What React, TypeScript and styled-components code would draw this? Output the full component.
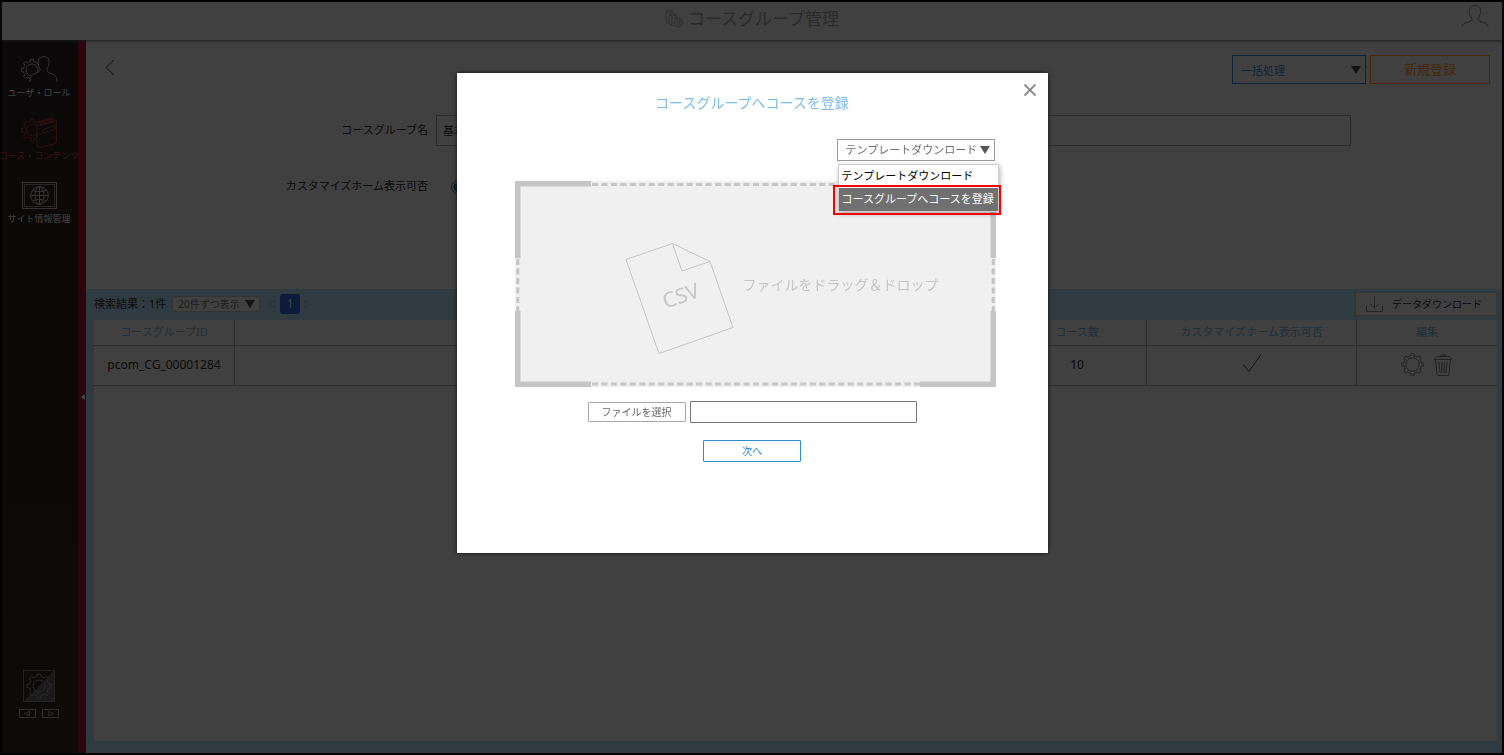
import React from "react";
import styled, { createGlobalStyle } from "styled-components";

const GlobalStyle = createGlobalStyle`
  *, *::before, *::after { box-sizing: border-box; }
  body {
    margin: 0;
    background: #000;
    font-family: "Noto Sans", "Noto Sans CJK JP", sans-serif;
    font-size: 11px;
    line-height: 16px;
    color: #0a0a0a;
  }
  button, input, select { font: inherit; color: inherit; margin: 0; }
  button { cursor: pointer; }
  svg { display: block; }
`;

/* ---------- page frame ---------- */

const Page = styled.div`
  display: flex;
  flex-direction: column;
  min-height: 100vh;
  border: 2px solid #000;
  background: #404040;
`;

const Header = styled.header`
  position: relative;
  z-index: 1;
  display: grid;
  grid-template-columns: 1fr auto 1fr;
  align-items: center;
  height: 38px;
  padding: 0 13px;
  background: #404040;
  box-shadow: 0 1px 3px #1c1c1c;
`;

const PageTitle = styled.h1`
  grid-column: 2;
  display: flex;
  align-items: center;
  gap: 4px;
  margin: 0;
  padding-bottom: 5px;
  font-size: 17px;
  line-height: 24px;
  font-weight: 400;
  color: #2b2b2b;
`;

const IconButton = styled.button`
  display: block;
  padding: 0;
  border: 0;
  background: none;
`;

const AccountButton = styled(IconButton)`
  justify-self: end;
  margin-bottom: 10px;
`;

const Body = styled.div`
  display: flex;
  flex: 1;
`;

/* ---------- side navigation ---------- */

const Sidebar = styled.aside`
  display: flex;
  flex-direction: column;
  flex: none;
  width: 76px;
  padding-right: 2px;
  background: linear-gradient(#0b0909, #0c0b08);
`;

const NavList = styled.nav`
  display: flex;
  flex-direction: column;
  gap: 14px;
  padding-top: 11px;
`;

const NavLink = styled.a<{ $active?: boolean }>`
  display: flex;
  flex-direction: column;
  align-items: center;
  justify-content: flex-end;
  gap: 1px;
  height: 49px;
  font-size: 9px;
  line-height: 14px;
  white-space: nowrap;
  text-decoration: none;
  color: ${(p) => (p.$active ? "#3f1216" : "#444")};
`;

const SideTools = styled.div`
  display: flex;
  flex-direction: column;
  align-items: center;
  gap: 7px;
  margin-top: auto;
  padding-bottom: 35px;
`;

const StepRow = styled.div`
  display: flex;
  gap: 6px;
`;

const RedBar = styled.button`
  flex: none;
  display: flex;
  align-items: center;
  justify-content: flex-end;
  width: 8px;
  padding: 0 1px 0 0;
  border: 0;
  background: #2c040c;
`;

/* ---------- main column ---------- */

const Main = styled.main`
  display: flex;
  flex-direction: column;
  flex: 1;
  min-width: 0;
`;

const FormPanel = styled.section`
  height: 249px;
  padding: 15px 12px 0 17px;
`;

const ActionRow = styled.div`
  display: flex;
  align-items: flex-start;
  gap: 4px;
`;

const BackButton = styled(IconButton)`
  margin: 4px auto 0 0;
`;

const SelectWrap = styled.span<{ $right: number; $arrow: string }>`
  position: relative;
  display: inline-flex;
  &::after {
    content: "";
    position: absolute;
    top: 50%;
    right: ${(p) => p.$right}px;
    margin-top: -4px;
    border: 5px solid transparent;
    border-top: 8px solid ${(p) => p.$arrow};
    border-bottom: 0;
    pointer-events: none;
  }
`;

const BatchSelect = styled.select`
  appearance: none;
  width: 134px;
  height: 29px;
  padding: 2px 8px 0;
  border: 1px solid #0c2536;
  border-radius: 0;
  background: transparent;
  color: #0e2638;
`;

const NewButton = styled.button`
  width: 120px;
  height: 29px;
  padding: 0 0 2px;
  border: 1px solid #462804;
  border-radius: 1px;
  background: transparent;
  font-size: 13px;
  color: #462804;
`;

const Field = styled.div<{ $top: number }>`
  display: grid;
  grid-template-columns: 325px 1fr;
  align-items: center;
  column-gap: 8px;
  margin-top: ${(p) => p.$top}px;
  padding-right: 139px;
`;

const FieldLabel = styled.label`
  text-align: right;
  padding-bottom: 2px;
`;

const NameInput = styled.input`
  width: 100%;
  height: 31px;
  padding: 0 6px 2px;
  border: 1px solid #2c2c2c;
  background: transparent;
`;

const HomeRadio = styled.input`
  appearance: none;
  width: 14px;
  height: 14px;
  margin: 0 0 0 15px;
  border: 1px solid #0c2536;
  border-radius: 50%;
  background: radial-gradient(#0a1e34 0 4px, transparent 5px);
`;

const Results = styled.section`
  display: flex;
  flex-direction: column;
  flex: 1;
  padding: 0 5px 12px 8px;
  background: #303a41;
`;

const ResultBar = styled.div`
  display: flex;
  align-items: center;
  height: 31px;
  padding-bottom: 2px;
`;

const PageSizeSelect = styled.select`
  appearance: none;
  width: 88px;
  height: 16px;
  margin-left: 6px;
  padding: 0 5px;
  border: 1px solid #333;
  border-radius: 3px;
  background: #404040;
  font-size: 10px;
  line-height: 14px;
  color: #1e1e1e;
`;

const Pager = styled.div`
  display: flex;
  align-items: center;
  gap: 4px;
  margin-left: 8px;
`;

const PageNumber = styled.button`
  width: 20px;
  height: 20px;
  padding: 0;
  border: 0;
  border-radius: 3px;
  background: #0c1b3c;
  font-size: 12px;
  color: #444;
`;

const DownloadButton = styled.button`
  display: flex;
  align-items: center;
  justify-content: space-between;
  width: 142px;
  height: 24px;
  margin-left: auto;
  padding: 0 14px 0 10px;
  border: 1px solid #343434;
  background: #404040;
  font-size: 10px;
`;

const TablePanel = styled.div`
  flex: 1;
  background: #404040;
`;

const DataTable = styled.table`
  width: 100%;
  table-layout: fixed;
  border-collapse: separate;
  border-spacing: 0;
`;

const HeadCell = styled.th<{ $width?: number }>`
  width: ${(p) => (p.$width ? `${p.$width}px` : "auto")};
  height: 26px;
  padding: 0 0 2px;
  border-bottom: 1px solid #2d2d2d;
  border-right: 1px solid #2d2d2d;
  font-weight: 400;
  color: #1f2f3c;
  &:last-child { border-right: 0; }
`;

const Cell = styled.td`
  height: 40px;
  padding: 0 0 2px;
  border-bottom: 1px solid #2d2d2d;
  border-right: 1px solid #2d2d2d;
  font-size: 12px;
  text-align: center;
  &:last-child { border-right: 0; }
  > svg { margin: 0 auto; }
`;

const RowActions = styled.div`
  display: flex;
  align-items: center;
  justify-content: center;
  gap: 10px;
  padding-right: 2px;
`;

/* ---------- dialog ---------- */

const DialogLayer = styled.div`
  position: fixed;
  inset: 0;
  z-index: 10;
  display: flex;
  align-items: flex-start;
  justify-content: center;
  padding: 73px 0 20px;
`;

const Dialog = styled.section`
  position: relative;
  display: flex;
  flex-direction: column;
  align-items: center;
  width: 591px;
  min-height: 480px;
  padding: 19px 52px 0;
  background: #fff;
  box-shadow: 0 0 4px #101010;
`;

const CloseButton = styled(IconButton)`
  position: absolute;
  top: 10px;
  right: 11px;
`;

const DialogTitle = styled.h2`
  margin: 0;
  font-size: 14px;
  line-height: 22px;
  font-weight: 400;
  color: #7dbbea;
`;

const ModeRow = styled.div`
  align-self: flex-end;
  position: relative;
  margin: 25px 1px 20px 0;
  display: flex;
`;

const ModeSelect = styled.select`
  appearance: none;
  width: 158px;
  height: 22px;
  padding: 0 8px;
  border: 1px solid #999;
  border-radius: 0;
  background: #fff;
  color: #707070;
`;

const OptionMenu = styled.ul`
  position: absolute;
  top: 25px;
  left: 1px;
  z-index: 2;
  width: 161px;
  margin: 0;
  padding: 0;
  list-style: none;
  border: 1px solid #ccc;
  background: #fff;
  box-shadow: 1px 2px 5px rgba(0, 0, 0, 0.3);
`;

const Option = styled.li<{ $selected?: boolean }>`
  padding: 0 3px;
  line-height: 22px;
  height: 23px;
  white-space: nowrap;
  background: ${(p) => (p.$selected ? "#707070" : "#fff")};
  color: ${(p) => (p.$selected ? "#fff" : "#000")};
`;

const Highlight = styled.span`
  position: absolute;
  top: 46px;
  left: -4px;
  z-index: 3;
  width: 168px;
  height: 30px;
  border: 2px solid #f80000;
  pointer-events: none;
`;

const DropZone = styled.div`
  position: relative;
  display: flex;
  align-self: flex-end;
  align-items: center;
  width: 481px;
  height: 206px;
  padding: 28px 0 0 110px;
  background: #f0f0f0;
`;

const DropFrame = styled.svg`
  position: absolute;
  inset: 0;
`;

const DropHint = styled.p`
  margin: 0 0 26px 8px;
  font-size: 14px;
  line-height: 22px;
  color: #c6c6c6;
`;

const FileRow = styled.div`
  display: flex;
  align-items: center;
  gap: 4px;
  margin-top: 14px;
`;

const DialogButton = styled.button<{ $primary?: boolean }>`
  width: 98px;
  height: ${(p) => (p.$primary ? 22 : 20)}px;
  padding: 0;
  border: 1px solid ${(p) => (p.$primary ? "#2a8fcc" : "#a8a8a8")};
  border-radius: 1px;
  background: #fff;
  font-size: 10px;
  line-height: 14px;
  color: ${(p) => (p.$primary ? "#2388c8" : "#666")};
`;

const FileName = styled.input`
  width: 227px;
  height: 22px;
  padding: 0 4px;
  border: 1px solid #767676;
  border-radius: 1px;
  background: #fff;
`;

const NextRow = styled.div`
  margin-top: 17px;
`;

/* ---------- drawings ---------- */

function gearPath(cx: number, cy: number, outer: number, inner: number, teeth = 8) {
  const step = (Math.PI * 2) / teeth;
  const at = (r: number, a: number) =>
    `${(cx + r * Math.cos(a)).toFixed(2)} ${(cy + r * Math.sin(a)).toFixed(2)}`;
  let d = "";
  for (let i = 0; i < teeth; i++) {
    const a = i * step;
    d += `${i ? "L" : "M"}${at(inner, a - step * 0.26)}L${at(outer, a - step * 0.17)}`;
    d += `A${outer} ${outer} 0 0 1 ${at(outer, a + step * 0.17)}L${at(inner, a + step * 0.26)}`;
    d += `A${inner} ${inner} 0 0 1 ${at(inner, a + step * 0.74)}`;
  }
  return d + "Z";
}

const UserRoleIcon = () => (
  <svg width="37" height="30" viewBox="0 0 37 30" fill="none" stroke="#363636" aria-hidden="true">
    <path d={gearPath(11, 15, 10.5, 8.5)} />
    <circle cx="11" cy="15" r="6" />
    <path
      fill="#0b0909"
      d="M9 27C9 20.500 11 19.500 15 18C18.500 17 19.500 16 18.800 13.500C17.500 12 16.500 8.500 17.500 5.500C18.500 .3 27 .3 28 5.500C28.500 9 27.500 11.500 26.300 13.500C25.500 16.500 26.500 17.300 30 18.500C34.500 20 36 21.500 36 27"
    />
  </svg>
);

const CourseIcon = () => (
  <svg width="37" height="32" viewBox="0 0 37 32" fill="none" stroke="#301013" aria-hidden="true">
    <path d={gearPath(11.5, 14, 11, 8.8)} />
    <circle cx="11.500" cy="14" r="6" />
    <path
      fill="#0b0909"
      d="M16 9C16 7 17 6.500 19 5.500L30 1.500L31 2.500L32 2.500L33 4L35.500 4.500V25.500C35.500 27 34.500 27.500 33 28L19 31.500C17 31.800 16 30.500 16 29Z"
    />
    <path d="M16 9C17 10 18 10 20 9.500L35.500 4.500M18 7.500L31 2.700M19 8.700L33 4M22 13.500L34 9.700V13L22 17Z" />
  </svg>
);

const SiteIcon = () => (
  <svg width="35" height="29" viewBox="0 0 35 29" fill="none" stroke="#343434" aria-hidden="true">
    <rect x=".5" y=".5" width="34" height="26" />
    <rect x="2.500" y="2.500" width="30" height="22" stroke="#262626" />
    <circle cx="17.500" cy="13.500" r="8.800" />
    <ellipse cx="17.500" cy="13.500" rx="4.500" ry="8.800" />
    <path d="M17.500 4.700V22.300M8.700 13.500H26.300M10.300 8.500Q17.500 11 24.700 8.500M10.300 18.500Q17.500 16 24.700 18.500" />
  </svg>
);

const ThemeIcon = () => (
  <svg width="32" height="32" viewBox="0 0 32 32" fill="none" aria-hidden="true">
    <path fill="#1a1a1a" d="M32 0V32H0Z" />
    <rect x=".5" y=".5" width="31" height="31" stroke="#222" />
    <g stroke="#292929">
      <path d={gearPath(16, 16, 12, 9.7)} />
      <circle cx="16" cy="16" r="6" />
    </g>
  </svg>
);

const StepIcon = ({ back }: { back?: boolean }) => (
  <svg width="17" height="9" viewBox="0 0 17 9" fill="none" stroke="#2c2c2c" aria-hidden="true">
    <rect x=".5" y=".5" width="16" height="8" />
    <path d={back ? "M10.500 2.500V6.500L5 4.500Z" : "M6.500 2.500V6.500L12 4.500Z"} />
  </svg>
);

const TitleIcon = () => (
  <svg width="19" height="19" viewBox="0 0 19 19" fill="none" stroke="#303030" aria-hidden="true">
    <path d="M1 2.500L4 1L7 2V5M1 2.500V13L4 14.500M1 2.500L4 4V14.500M4 4L7 2M4 7L7.500 4.500L11 5.500V8M4.500 14.500L7 16V7L11 5.500M7 7L4.500 6M7.500 16L9 16.500M9 9L12 7.500L13 8" />
    <path fill="#404040" d={gearPath(13.5, 13.5, 4.8, 3.6)} />
    <circle cx="13.500" cy="13.500" r="1.800" />
  </svg>
);

const AccountIcon = () => (
  <svg width="28" height="24" viewBox="0 0 28 24" fill="none" stroke="#242424" aria-hidden="true">
    <path d="M1 22.500C1 18 10.500 18.500 10.800 15.500C10.800 13.500 9.500 13.500 9.200 11C7.800 10 8 7.800 8.600 7.500C8.300 3.500 9.500 1.500 14 1.500C18.500 1.500 19.700 3.500 19.400 7.500C20 7.800 20.200 10 18.800 11C18.500 13.500 17.200 13.500 17.200 15.500C17.500 18.500 27 18 27 22.500" />
  </svg>
);

const BackIcon = () => (
  <svg width="12" height="17" viewBox="0 0 12 17" fill="none" stroke="#151515" aria-hidden="true">
    <path d="M11 1L3 8.500L11 16" />
  </svg>
);

const PagerArrow = ({ next }: { next?: boolean }) => (
  <svg width="8" height="10" viewBox="0 0 8 10" fill="none" stroke="#25343c" aria-hidden="true">
    <path d={next ? "M1 1V9L7 5Z" : "M7 1V9L1 5Z"} />
  </svg>
);

const DownloadIcon = () => (
  <svg width="17" height="16" viewBox="0 0 17 16" fill="none" stroke="#262626" aria-hidden="true">
    <path d="M.5 10V15.500H16.500V10M8.500 0V12M4.500 8L8.500 12.300L12.500 8" />
  </svg>
);

const CheckIcon = () => (
  <svg width="20" height="21" viewBox="0 0 20 21" fill="none" stroke="#141414" aria-hidden="true">
    <path d="M1 10.500L7 17.500L19 .5" />
  </svg>
);

const GearIcon = () => (
  <svg width="23" height="23" viewBox="0 0 23 23" fill="none" stroke="#222" aria-hidden="true">
    <path d={gearPath(11.5, 11.5, 10.8, 8.8)} />
    <circle cx="11.500" cy="11.500" r="6.800" />
  </svg>
);

const TrashIcon = () => (
  <svg width="18" height="22" viewBox="0 0 18 22" fill="none" stroke="#222" aria-hidden="true">
    <path d="M.5 5.500C.5 3.500 2 2.800 4 2.500H14C16 2.800 17.500 3.500 17.500 5.500ZM6 2.500C6 .2 12 .2 12 2.500M1.500 5.500L3 20C3.200 21 3.500 21.500 4.500 21.500H13.500C14.500 21.500 14.800 21 15 20L16.500 5.500M5 8L6 19M7.800 8V19M10.200 8V19M13 8L12 19" />
  </svg>
);

const CloseIcon = () => (
  <svg width="14" height="14" viewBox="0 0 14 14" stroke="#8a8a8a" strokeWidth="1.800" aria-hidden="true">
    <path d="M1.500 1.500L12.500 12.500M12.500 1.500L1.500 12.500" />
  </svg>
);

const CsvFile = () => (
  <svg width="110" height="113" viewBox="0 0 110 113" fill="none" stroke="#c6c6c6" role="img" aria-label="CSV">
    <path d="M1 17.500L47.500 1.500L85 19.500L108 85.500L34 111.500ZM47.500 1.500L57 29L85 19.500" />
    <text
      x="56"
      y="61"
      textAnchor="middle"
      fontSize="21"
      fill="#c6c6c6"
      stroke="none"
      transform="rotate(-19 56 54)"
    >
      CSV
    </text>
  </svg>
);

const Frame = () => (
  <DropFrame width="481" height="206" viewBox="0 0 481 206" fill="none" stroke="#c5c5c5" aria-hidden="true">
    <path
      strokeWidth="5.500"
      d="M76 2.750H2.750V77M405 2.750H478.250V77M2.750 130V203.250H76M478.250 130V203.250H405"
    />
    <path strokeWidth="3" strokeDasharray="6 3.470" d="M77 3.500H405M77 203H405M2.800 78V130M478.200 78V130" />
  </DropFrame>
);

/* ---------- screen ---------- */

export default function App() {
  return (
    <>
      <GlobalStyle />
      <Page>
        <Header>
          <PageTitle>
            <TitleIcon />
            コースグループ管理
          </PageTitle>
          <AccountButton type="button" aria-label="アカウント">
            <AccountIcon />
          </AccountButton>
        </Header>
        <Body>
          <Sidebar>
            <NavList>
              <NavLink href="#users">
                <UserRoleIcon />
                ユーザ・ロール
              </NavLink>
              <NavLink href="#courses" $active>
                <CourseIcon />
                コース・コンテンツ
              </NavLink>
              <NavLink href="#site">
                <SiteIcon />
                サイト情報管理
              </NavLink>
            </NavList>
            <SideTools>
              <IconButton type="button" aria-label="テーマ">
                <ThemeIcon />
              </IconButton>
              <StepRow>
                <IconButton type="button" aria-label="前へ">
                  <StepIcon back />
                </IconButton>
                <IconButton type="button" aria-label="次へ進む">
                  <StepIcon />
                </IconButton>
              </StepRow>
            </SideTools>
          </Sidebar>
          <RedBar type="button" aria-label="メニューを閉じる">
            <svg width="4" height="8" viewBox="0 0 4 8" fill="#444" aria-hidden="true">
              <path d="M4 1V7L0 4Z" />
            </svg>
          </RedBar>
          <Main>
            <FormPanel>
              <ActionRow>
                <BackButton type="button" aria-label="戻る">
                  <BackIcon />
                </BackButton>
                <SelectWrap $right={5} $arrow="#111">
                  <BatchSelect aria-label="一括処理">
                    <option>一括処理</option>
                  </BatchSelect>
                </SelectWrap>
                <NewButton type="button">新規登録</NewButton>
              </ActionRow>
              <Field $top={31}>
                <FieldLabel htmlFor="group-name">コースグループ名</FieldLabel>
                <NameInput id="group-name" defaultValue="基本" />
              </Field>
              <Field $top={32}>
                <FieldLabel htmlFor="home-visible">カスタマイズホーム表示可否</FieldLabel>
                <HomeRadio id="home-visible" type="radio" defaultChecked />
              </Field>
            </FormPanel>
            <Results>
              <ResultBar>
                <span>検索結果：1件</span>
                <SelectWrap $right={5} $arrow="#141414">
                  <PageSizeSelect aria-label="表示件数">
                    <option>20件ずつ表示</option>
                  </PageSizeSelect>
                </SelectWrap>
                <Pager>
                  <PagerArrow />
                  <PageNumber type="button">1</PageNumber>
                  <PagerArrow next />
                </Pager>
                <DownloadButton type="button">
                  <DownloadIcon />
                  データダウンロード
                </DownloadButton>
              </ResultBar>
              <TablePanel>
                <DataTable>
                  <thead>
                    <tr>
                      <HeadCell $width={141}>コースグループID</HeadCell>
                      <HeadCell />
                      <HeadCell $width={139}>コース数</HeadCell>
                      <HeadCell $width={210}>カスタマイズホーム表示可否</HeadCell>
                      <HeadCell $width={140}>編集</HeadCell>
                    </tr>
                  </thead>
                  <tbody>
                    <tr>
                      <Cell>pcom_CG_00001284</Cell>
                      <Cell />
                      <Cell>10</Cell>
                      <Cell>
                        <CheckIcon />
                      </Cell>
                      <Cell>
                        <RowActions>
                          <IconButton type="button" aria-label="編集">
                            <GearIcon />
                          </IconButton>
                          <IconButton type="button" aria-label="削除">
                            <TrashIcon />
                          </IconButton>
                        </RowActions>
                      </Cell>
                    </tr>
                  </tbody>
                </DataTable>
              </TablePanel>
            </Results>
          </Main>
        </Body>
      </Page>
      <DialogLayer>
        <Dialog role="dialog" aria-modal="true" aria-labelledby="dialog-title">
          <CloseButton type="button" aria-label="閉じる">
            <CloseIcon />
          </CloseButton>
          <DialogTitle id="dialog-title">コースグループへコースを登録</DialogTitle>
          <ModeRow>
            <SelectWrap $right={5} $arrow="#555">
              <ModeSelect aria-label="処理の種類">
                <option>テンプレートダウンロード</option>
              </ModeSelect>
            </SelectWrap>
            <OptionMenu role="listbox" aria-label="処理の種類">
              <Option role="option">テンプレートダウンロード</Option>
              <Option role="option" aria-selected="true" $selected>
                コースグループへコースを登録
              </Option>
            </OptionMenu>
            <Highlight />
          </ModeRow>
          <DropZone>
            <Frame />
            <CsvFile />
            <DropHint>ファイルをドラッグ＆ドロップ</DropHint>
          </DropZone>
          <FileRow>
            <DialogButton type="button">ファイルを選択</DialogButton>
            <FileName type="text" aria-label="ファイル名" readOnly />
          </FileRow>
          <NextRow>
            <DialogButton type="button" $primary>
              次へ
            </DialogButton>
          </NextRow>
        </Dialog>
      </DialogLayer>
    </>
  );
}
